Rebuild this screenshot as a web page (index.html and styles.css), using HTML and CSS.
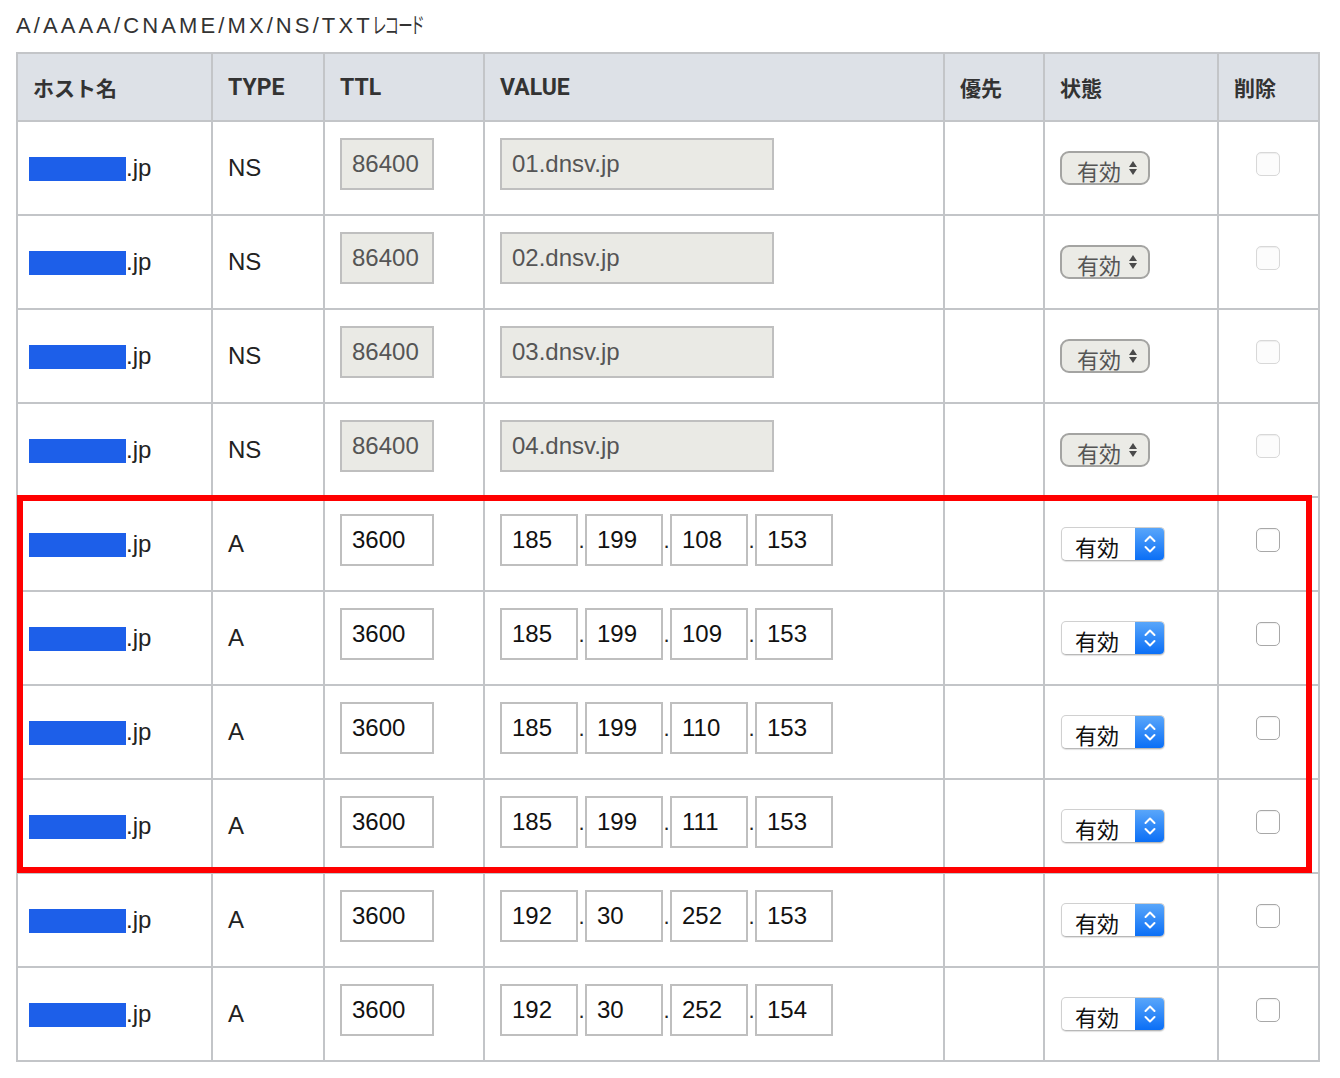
FILE: index.html
```html
<!DOCTYPE html>
<html lang="ja">
<head>
<meta charset="utf-8">
<title>DNSレコード</title>
<link rel="stylesheet" href="styles.css">
</head>
<body>
<h2 class="title"><span class="title-latin">A/AAAA/CNAME/MX/NS/TXT</span><span class="title-kana">レコード</span></h2>
<div class="table-wrap">
<table class="records">
<colgroup>
<col class="c-host"><col class="c-type"><col class="c-ttl"><col class="c-value"><col class="c-prio"><col class="c-state"><col class="c-del">
</colgroup>
<thead>
<tr><th class="ja">ホスト名</th><th>TYPE</th><th>TTL</th><th>VALUE</th><th class="ja">優先</th><th class="ja">状態</th><th class="ja">削除</th></tr>
</thead>
<tbody>
<tr>
<td class="host"><span class="mask"></span>.jp</td><td>NS</td>
<td><input class="field ro ttl" value="86400" readonly></td>
<td><input class="field ro value" value="01.dnsv.jp" readonly></td>
<td></td>
<td><span class="select disabled"><span class="select-label">有効</span><svg class="tri" width="10" height="16" viewBox="0 0 10 16"><path d="M5 1 L9 7 H1 Z M1 9 H9 L5 15 Z" fill="#4a4a4a"/></svg></span></td>
<td class="del"><span class="check disabled"></span></td>
</tr>
<tr>
<td class="host"><span class="mask"></span>.jp</td><td>NS</td>
<td><input class="field ro ttl" value="86400" readonly></td>
<td><input class="field ro value" value="02.dnsv.jp" readonly></td>
<td></td>
<td><span class="select disabled"><span class="select-label">有効</span><svg class="tri" width="10" height="16" viewBox="0 0 10 16"><path d="M5 1 L9 7 H1 Z M1 9 H9 L5 15 Z" fill="#4a4a4a"/></svg></span></td>
<td class="del"><span class="check disabled"></span></td>
</tr>
<tr>
<td class="host"><span class="mask"></span>.jp</td><td>NS</td>
<td><input class="field ro ttl" value="86400" readonly></td>
<td><input class="field ro value" value="03.dnsv.jp" readonly></td>
<td></td>
<td><span class="select disabled"><span class="select-label">有効</span><svg class="tri" width="10" height="16" viewBox="0 0 10 16"><path d="M5 1 L9 7 H1 Z M1 9 H9 L5 15 Z" fill="#4a4a4a"/></svg></span></td>
<td class="del"><span class="check disabled"></span></td>
</tr>
<tr>
<td class="host"><span class="mask"></span>.jp</td><td>NS</td>
<td><input class="field ro ttl" value="86400" readonly></td>
<td><input class="field ro value" value="04.dnsv.jp" readonly></td>
<td></td>
<td><span class="select disabled"><span class="select-label">有効</span><svg class="tri" width="10" height="16" viewBox="0 0 10 16"><path d="M5 1 L9 7 H1 Z M1 9 H9 L5 15 Z" fill="#4a4a4a"/></svg></span></td>
<td class="del"><span class="check disabled"></span></td>
</tr>
<tr>
<td class="host"><span class="mask"></span>.jp</td><td>A</td>
<td><input class="field ttl" value="3600"></td>
<td><span class="ip"><input class="field oct" value="185"><span class="dot">.</span><input class="field oct" value="199"><span class="dot">.</span><input class="field oct" value="108"><span class="dot">.</span><input class="field oct" value="153"></span></td>
<td></td>
<td><span class="select"><span class="select-label">有効</span><span class="select-btn"><svg width="14" height="22" viewBox="0 0 14 22"><path d="M2.5 8 L7 3.5 L11.5 8 M2.5 14 L7 18.5 L11.5 14" fill="none" stroke="#fff" stroke-width="2" stroke-linecap="round" stroke-linejoin="round"/></svg></span></span></td>
<td class="del"><span class="check"></span></td>
</tr>
<tr>
<td class="host"><span class="mask"></span>.jp</td><td>A</td>
<td><input class="field ttl" value="3600"></td>
<td><span class="ip"><input class="field oct" value="185"><span class="dot">.</span><input class="field oct" value="199"><span class="dot">.</span><input class="field oct" value="109"><span class="dot">.</span><input class="field oct" value="153"></span></td>
<td></td>
<td><span class="select"><span class="select-label">有効</span><span class="select-btn"><svg width="14" height="22" viewBox="0 0 14 22"><path d="M2.5 8 L7 3.5 L11.5 8 M2.5 14 L7 18.5 L11.5 14" fill="none" stroke="#fff" stroke-width="2" stroke-linecap="round" stroke-linejoin="round"/></svg></span></span></td>
<td class="del"><span class="check"></span></td>
</tr>
<tr>
<td class="host"><span class="mask"></span>.jp</td><td>A</td>
<td><input class="field ttl" value="3600"></td>
<td><span class="ip"><input class="field oct" value="185"><span class="dot">.</span><input class="field oct" value="199"><span class="dot">.</span><input class="field oct" value="110"><span class="dot">.</span><input class="field oct" value="153"></span></td>
<td></td>
<td><span class="select"><span class="select-label">有効</span><span class="select-btn"><svg width="14" height="22" viewBox="0 0 14 22"><path d="M2.5 8 L7 3.5 L11.5 8 M2.5 14 L7 18.5 L11.5 14" fill="none" stroke="#fff" stroke-width="2" stroke-linecap="round" stroke-linejoin="round"/></svg></span></span></td>
<td class="del"><span class="check"></span></td>
</tr>
<tr>
<td class="host"><span class="mask"></span>.jp</td><td>A</td>
<td><input class="field ttl" value="3600"></td>
<td><span class="ip"><input class="field oct" value="185"><span class="dot">.</span><input class="field oct" value="199"><span class="dot">.</span><input class="field oct" value="111"><span class="dot">.</span><input class="field oct" value="153"></span></td>
<td></td>
<td><span class="select"><span class="select-label">有効</span><span class="select-btn"><svg width="14" height="22" viewBox="0 0 14 22"><path d="M2.5 8 L7 3.5 L11.5 8 M2.5 14 L7 18.5 L11.5 14" fill="none" stroke="#fff" stroke-width="2" stroke-linecap="round" stroke-linejoin="round"/></svg></span></span></td>
<td class="del"><span class="check"></span></td>
</tr>
<tr>
<td class="host"><span class="mask"></span>.jp</td><td>A</td>
<td><input class="field ttl" value="3600"></td>
<td><span class="ip"><input class="field oct" value="192"><span class="dot">.</span><input class="field oct" value="30"><span class="dot">.</span><input class="field oct" value="252"><span class="dot">.</span><input class="field oct" value="153"></span></td>
<td></td>
<td><span class="select"><span class="select-label">有効</span><span class="select-btn"><svg width="14" height="22" viewBox="0 0 14 22"><path d="M2.5 8 L7 3.5 L11.5 8 M2.5 14 L7 18.5 L11.5 14" fill="none" stroke="#fff" stroke-width="2" stroke-linecap="round" stroke-linejoin="round"/></svg></span></span></td>
<td class="del"><span class="check"></span></td>
</tr>
<tr>
<td class="host"><span class="mask"></span>.jp</td><td>A</td>
<td><input class="field ttl" value="3600"></td>
<td><span class="ip"><input class="field oct" value="192"><span class="dot">.</span><input class="field oct" value="30"><span class="dot">.</span><input class="field oct" value="252"><span class="dot">.</span><input class="field oct" value="154"></span></td>
<td></td>
<td><span class="select"><span class="select-label">有効</span><span class="select-btn"><svg width="14" height="22" viewBox="0 0 14 22"><path d="M2.5 8 L7 3.5 L11.5 8 M2.5 14 L7 18.5 L11.5 14" fill="none" stroke="#fff" stroke-width="2" stroke-linecap="round" stroke-linejoin="round"/></svg></span></span></td>
<td class="del"><span class="check"></span></td>
</tr>
</tbody>
</table>
<div class="highlight"></div>
</div>
</body>
</html>
```

FILE: styles.css
```css
html, body {
  margin: 0;
  padding: 0;
  background: #fff;
}
body {
  padding: 0 16px;
  font-family: "Liberation Sans", "Noto Sans CJK JP", sans-serif;
  color: #222;
}
.title {
  margin: 0;
  padding-top: 8px;
  height: 30px;
  font-size: 22px;
  line-height: 30px;
  font-weight: normal;
  color: #333;
  white-space: nowrap;
  display: flex;
  align-items: baseline;
}
.title-latin {
  letter-spacing: 3.1px;
}
.title-kana {
  display: inline-block;
  font-family: "Noto Sans CJK JP", sans-serif;
  font-feature-settings: "palt";
  font-size: 22px;
  line-height: 30px;
  letter-spacing: -1px;
  transform: scaleX(0.66);
  transform-origin: left center;
}
.table-wrap {
  position: relative;
  margin-top: 14px;
  width: 1304px;
}
.records {
  border-collapse: collapse;
  table-layout: fixed;
  width: 1304px;
}
.c-host { width: 195px; }
.c-type { width: 112px; }
.c-ttl { width: 160px; }
.c-value { width: 460px; }
.c-prio { width: 100px; }
.c-state { width: 174px; }
.c-del { width: 101px; }

.records th,
.records td {
  border: 2px solid #c3c5c8;
  padding: 0 0 0 15px;
  text-align: left;
  vertical-align: middle;
}
.records thead tr {
  height: 68px;
}
.records th {
  background: #dde1e7;
  font-family: Roboto, "Noto Sans CJK JP", sans-serif;
  font-size: 23px;
  font-weight: bold;
  color: #333;
}
.records th.ja {
  font-family: "Noto Sans CJK JP", sans-serif;
  font-size: 21px;
}
.records tbody tr {
  height: 94px;
}
.records td {
  font-size: 24px;
  color: #222;
}
.records td.host {
  padding-left: 11px;
}
.mask {
  display: inline-block;
  width: 97px;
  height: 24px;
  background: #1d5fe9;
  vertical-align: -5px;
}
.field {
  box-sizing: border-box;
  height: 52px;
  margin: 0 0 9px 0;
  padding: 0 0 0 10px;
  border: 2px solid #bfbfbf;
  border-radius: 0;
  background: #fff;
  color: #111;
  font-family: "Liberation Sans", sans-serif;
  font-size: 24px;
  outline: none;
  vertical-align: middle;
}
.field.ro {
  background: #eaeae5;
  color: #555;
}
.ttl { width: 94px; }
.value { width: 274px; }
.ip {
  display: inline-flex;
  align-items: baseline;
  margin-bottom: 9px;
  vertical-align: middle;
}
.ip .field {
  margin: 0;
}
.oct { width: 78px; }
.dot {
  width: 7px;
  text-align: center;
  font-size: 22px;
}
.select {
  display: inline-flex;
  align-items: center;
  box-sizing: border-box;
  height: 34px;
  width: 104px;
  margin-left: 1px;
  background: #fff;
  border: 1px solid #d0d0d0;
  border-bottom-color: #b8b8b8;
  border-radius: 5px;
  box-shadow: 0 1px 1px rgba(0,0,0,0.12);
  overflow: hidden;
  vertical-align: middle;
  font-family: "Noto Sans CJK JP", sans-serif;
  font-size: 22px;
  color: #111;
}
.select-label {
  flex: 1;
  padding-left: 13px;
  line-height: 34px;
  padding-top: 4px;
}
.select-btn {
  width: 29px;
  height: 100%;
  display: flex;
  align-items: center;
  justify-content: center;
  background: linear-gradient(#59a6fa, #0b6ff6);
}
.select.disabled {
  width: 90px;
  margin-left: 0;
  border: 2px solid #a4a4a2;
  border-radius: 9px;
  background: #ebebe6;
  box-shadow: none;
  color: #555;
}
.select.disabled .select-label {
  padding-left: 15px;
}
.tri {
  margin-right: 10px;
}
.check {
  display: inline-block;
  box-sizing: border-box;
  width: 24px;
  height: 24px;
  border: 1px solid #a8a8a8;
  border-radius: 5px;
  background: #fff;
  box-shadow: inset 0 1px 1px rgba(0,0,0,0.06);
  vertical-align: middle;
  margin-bottom: 8px;
}
.check.disabled {
  border-color: #d8d8d8;
  background: #fcfcfc;
}
.records td.del {
  text-align: center;
  padding: 0 2px 0 0;
}
.highlight {
  position: absolute;
  left: 1px;
  top: 443px;
  width: 1295px;
  height: 378px;
  box-sizing: border-box;
  border: 6px solid #ff0000;
  pointer-events: none;
}
```
